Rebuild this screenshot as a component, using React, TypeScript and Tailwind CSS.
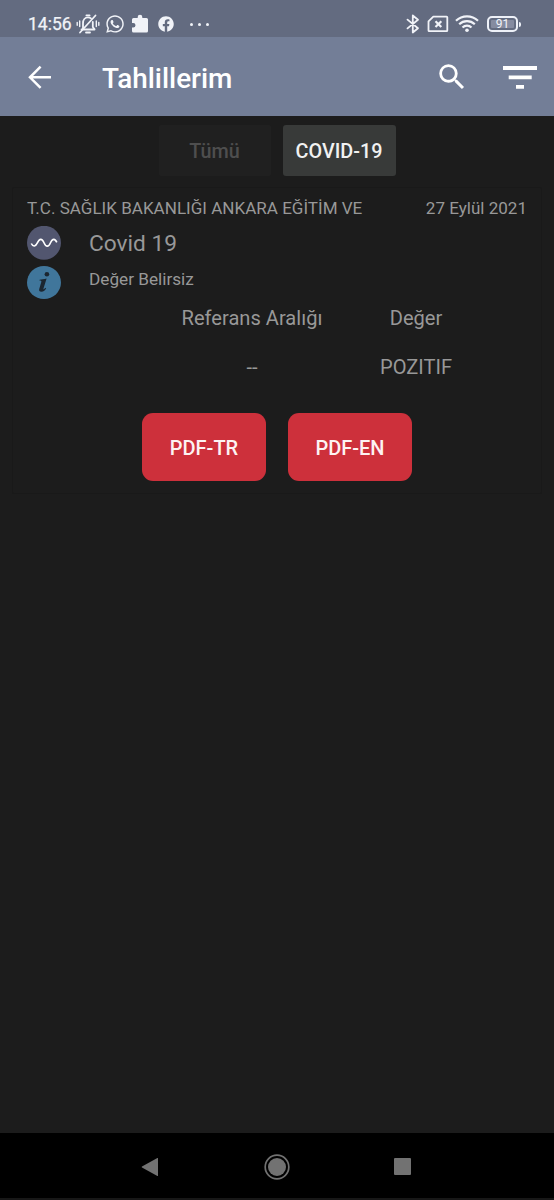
import React from "react";
import { FaFacebook, FaWhatsapp } from "react-icons/fa";
import { MdSearch } from "react-icons/md";

function MutedBell() {
  return (
    <svg className="ml-[3px] h-5 w-6" viewBox="0 0 24 20" fill="none" stroke="currentColor" strokeWidth="1.8" strokeLinecap="round">
      <path d="M5.500 15.500h13M7 14.500V9.200C7 5.800 9 3.400 12 3.400c1.200 0 2.200.4 3 1M16.800 8v5l1.800 2.300" />
      <path d="M10.400 1.400h3.200M10 18.500h4" />
      <path d="M4 18.500 19.500 1.500" />
      <path d="M3.700 7v5.500M1.200 8.500v2.800M20.300 7v5.500M22.800 8.500v2.800" strokeWidth="1.400" />
    </svg>
  );
}

function Puzzle() {
  return (
    <svg className="ml-[7px] h-5 w-[17px]" viewBox="0 0 17 20" fill="currentColor">
      <path d="M1.500 4H5.700V3a2.300 2.300 0 0 1 4.600 0v1H14.500Q16 4 16 5.500V17q0 1.500-1.500 1.500h-13Q0 18.500 0 17v-3.500h1.200a2.300 2.300 0 0 0 0-4.600H0V5.500Q0 4 1.500 4z" />
    </svg>
  );
}

function Bluetooth() {
  return (
    <svg className="h-5 w-[14px]" viewBox="0 0 14 20" fill="none" stroke="currentColor" strokeWidth="1.800" strokeLinejoin="round" strokeLinecap="round">
      <path d="m1.500 5.600 10.500 8.700-5.200 4.200V1.500L12 5.700 1.500 14.400" />
    </svg>
  );
}

function SimMissing() {
  return (
    <svg className="ml-[7px] h-5 w-[22px]" viewBox="0 0 22 20" fill="none" stroke="currentColor" strokeWidth="1.800" strokeLinejoin="round">
      <path d="M6.300 2.600H19.600q.7 0 .7.700V16.500q0 .7-.7.700H2.200q-.7 0-.7-.7V7.400z" />
      <path d="m8.500 7.200 5.800 5.800m0-5.800-5.800 5.800" strokeWidth="2.200" />
    </svg>
  );
}

function Wifi() {
  return (
    <svg className="ml-[6px] h-5 w-6" viewBox="0 0 24 20" fill="none" stroke="currentColor" strokeWidth="2.200">
      <path d="M1 6.700a16 16 0 0 1 22 0M4.200 10.200a11.300 11.300 0 0 1 15.600 0M7.500 13.500a6.500 6.500 0 0 1 9 0" />
      <circle cx="12" cy="16.300" r="1.800" fill="currentColor" stroke="none" />
    </svg>
  );
}

function Battery() {
  return (
    <div className="ml-[8px] flex items-center">
      <div className="flex h-[16px] w-[31px] items-center rounded-[5px] border-2 border-[#eef1f8] p-[2px]">
        <div className="flex h-full w-full items-center justify-center rounded-[1px] bg-[#858ba0] text-[12px] leading-none">91</div>
      </div>
      <div className="ml-px h-[5px] w-[2px] rounded-r bg-[#eef1f8]" />
    </div>
  );
}

function StatusBar() {
  return (
    <div className="flex h-[37px] items-start bg-[#636b80] pt-[14px] pr-[33px] pl-[28px] text-[#f1f3f8]">
      <div className="flex h-5 items-center">
        <span className="w-[45px] text-[17.500px] leading-5 whitespace-nowrap [-webkit-text-stroke:0.250px_currentColor]">14:56</span>
        <MutedBell />
        <FaWhatsapp className="ml-[5px] size-[20px]" />
        <Puzzle />
        <FaFacebook className="ml-[9px] size-4" />
        <div className="ml-[16px] flex gap-[5px]">
          <i className="size-[3px] rounded-full bg-current" />
          <i className="size-[3px] rounded-full bg-current" />
          <i className="size-[3px] rounded-full bg-current" />
        </div>
      </div>
      <div className="ml-auto flex h-5 items-center">
        <Bluetooth />
        <SimMissing />
        <Wifi />
        <Battery />
      </div>
    </div>
  );
}

function Toolbar() {
  return (
    <header className="flex h-[79px] items-center bg-[#737e97] pr-[17px] pl-[28px] text-white">
      <svg className="h-6 w-6" viewBox="0 0 24 24" fill="none" stroke="currentColor" strokeWidth="2.500">
        <path d="M23 12.300H2.200M12.600 1.700 2 12.300l10.600 10.600" />
      </svg>
      <h1 className="mt-[4px] ml-[50px] text-[27.900px] leading-8 font-medium">Tahlillerim</h1>
      <MdSearch className="ml-auto size-[34px]" />
      <svg className="ml-[34px] h-6 w-[34px]" viewBox="0 0 34 24" fill="currentColor">
        <path d="M0 1h34v4H0zM5.700 10.500h23v3.800h-23zM13 20h8v3.800h-8z" />
      </svg>
    </header>
  );
}

function PdfButton({ label }: { label: string }) {
  return (
    <button className="flex h-[68px] w-[124px] items-center justify-center rounded-[11px] bg-[#cd303b] pt-[2px] text-[20px] font-medium text-[#fdf3f3]">
      {label}
    </button>
  );
}

function ResultCard() {
  return (
    <section className="mx-[12px] mt-[11px] h-[307px] rounded-[2px] border border-[#191919] bg-[#1c1c1c] text-[#989898]">
      <div className="mt-[10px] flex justify-between px-[14px] text-[17.060px] leading-5 whitespace-nowrap">
        <span>T.C. SAĞLIK BAKANLIĞI ANKARA EĞİTİM VE</span>
        <span>27 Eylül 2021</span>
      </div>
      <div className="mt-[8px] flex h-[34px] items-center pl-[14px]">
        <svg className="size-[34px] shrink-0" viewBox="0 0 34 34" fill="none">
          <circle cx="17" cy="16.800" r="17" fill="#52566f" />
          <path d="M4.300 17.500c1.800 3.600 4.200 3.400 6.200-.8s4.500-4.600 6.500 0 4.500 4.600 6.500 0 4.700-4.300 6.300-.3" stroke="#fff" strokeWidth="1.600" />
        </svg>
        <span className="mt-[2px] ml-[28px] text-[22.700px] leading-7">Covid 19</span>
      </div>
      <div className="mt-[5px] flex h-[34px] items-start pl-[14px]">
        <svg className="size-[34px] shrink-0" viewBox="0 0 34 34">
          <ellipse cx="17" cy="17.500" rx="17" ry="16.500" fill="#40769b" />
          <circle cx="19.900" cy="9.200" r="2.300" fill="#1b2630" />
          <path d="M12.600 14.800c2-.2 4.500-.7 7-1.300l-3.100 9.900c-.4 1.300.5 1.200 1.800-.6l.8.600c-1.400 2.400-2.800 3.300-4.600 3.300-2.100 0-2.800-1.200-2.200-3l2-6.600c.3-1-.1-1.500-1.900-1.500z" fill="#1b2630" />
        </svg>
        <span className="mt-[4px] ml-[28px] text-[17.200px] leading-5">Değer Belirsiz</span>
      </div>
      <div className="mt-[7px] grid grid-cols-[164px_150px_1fr] text-center text-[20.100px] leading-6 whitespace-nowrap">
        <span />
        <span>Referans Aralığı</span>
        <span className="ml-[23px] w-[132px]">Değer</span>
      </div>
      <div className="mt-[25px] grid grid-cols-[164px_150px_1fr] text-center text-[20.100px] leading-6 whitespace-nowrap">
        <span />
        <span>--</span>
        <span className="ml-[23px] w-[132px]">POZITIF</span>
      </div>
      <div className="mt-[34px] flex justify-center gap-[22px]">
        <PdfButton label="PDF-TR" />
        <PdfButton label="PDF-EN" />
      </div>
    </section>
  );
}

function NavigationBar() {
  return (
    <nav className="flex h-[67px] items-center justify-between border-b-2 border-[#171717] bg-black pt-[2px] pr-[143px] pl-[141px] text-[#727272]">
      <svg className="h-5 w-[18px]" viewBox="0 0 18 20" fill="currentColor">
        <path d="M17 1.300v17.400q0 .6-.6.300L1 10.500q-.8-.5 0-1L16.400 1q.6-.3.600.3z" />
      </svg>
      <svg className="size-[26px]" viewBox="0 0 26 26" fill="currentColor">
        <circle cx="13" cy="13" r="11.800" fill="none" stroke="currentColor" strokeWidth="1.700" />
        <circle cx="13" cy="13" r="9" />
      </svg>
      <div className="size-[17px] rounded-[1px] bg-[#727272]" />
    </nav>
  );
}

export default function App() {
  return (
    <div className="flex h-[1200px] w-[554px] flex-col overflow-hidden bg-[#1c1c1c] font-['Roboto',sans-serif]">
      <StatusBar />
      <Toolbar />
      <main className="flex-1">
        <div className="mt-[9px] flex justify-center gap-[12px] text-[19.800px] font-medium">
          <button className="flex h-[51px] w-[112px] items-center justify-center rounded-[2px] bg-[#202020] pt-[2px] text-[#4e4e4e]">Tümü</button>
          <button className="flex h-[51px] w-[113px] items-center justify-center rounded-[3px] bg-[#383a39] pt-[2px] text-[#f1f1f1]">COVID-19</button>
        </div>
        <ResultCard />
      </main>
      <NavigationBar />
    </div>
  );
}
